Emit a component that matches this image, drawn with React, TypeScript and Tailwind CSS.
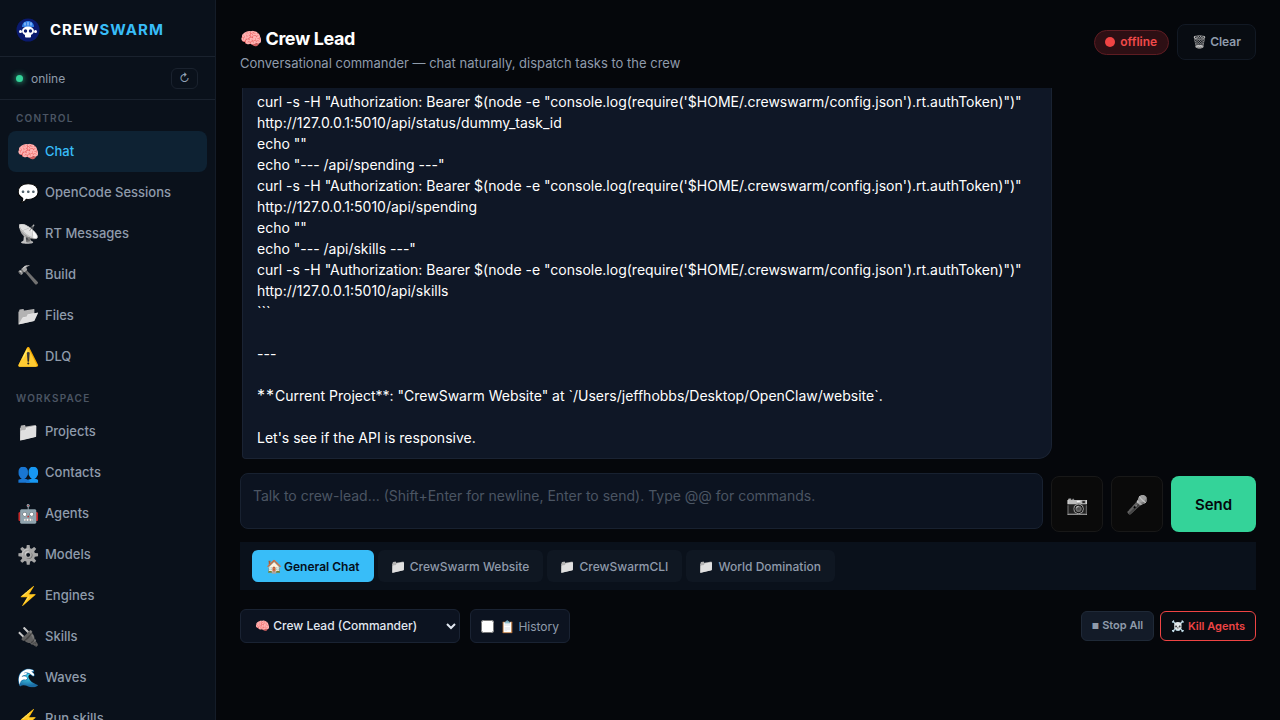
const inter = { fontFamily: 'Inter, "Noto Sans", sans-serif' };

const Logo = () => (
  <svg viewBox="0 0 24 24" className="w-[24px] h-[24px] shrink-0">
    <circle cx="12" cy="12" r="11.5" fill="#0a1a6e" />
    <path d="M6 9c0-4 3-6 6-6s6 2 6 6z" fill="#2f7fe8" />
    <path d="M9 4.500v3M12 4v3.500M15 4.500v3" stroke="#bcdcff" strokeWidth="1" />
    <ellipse cx="12" cy="13" rx="6" ry="4.500" fill="#fff" />
    <rect x="9" y="16" width="6" height="3.500" rx="1" fill="#fff" />
    <circle cx="9.500" cy="13" r="1.700" fill="#0a1a6e" />
    <circle cx="14.500" cy="13" r="1.700" fill="#0a1a6e" />
    <circle cx="4.500" cy="13.500" r="1.500" fill="#fff" />
    <circle cx="19.500" cy="13.500" r="1.500" fill="#fff" />
  </svg>
);

const NavItem = ({ icon, label, active, gray }: { icon: string; label: string; active?: boolean; gray?: boolean }) => (
  <div
    className={
      active
        ? 'h-[41px] mx-2 px-[9px] rounded-lg flex items-center gap-[9px] bg-[#0e2233] text-[#38bdf8] text-[13px] font-medium'
        : 'h-[41px] mx-2 px-[9px] flex items-center gap-[9px] text-[#8f9bab] text-[13px] font-medium'
    }
  >
    <span className={gray ? 'w-[19px] text-[18px] leading-none text-center shrink-0 grayscale' : 'w-[19px] text-[18px] leading-none text-center shrink-0'}>{icon}</span>
    <span>{label}</span>
  </div>
);

const SectionLabel = ({ children }: { children: string }) => (
  <div className="px-4 text-[10px] font-semibold tracking-[1.2px] text-[#4b5563] uppercase">{children}</div>
);

const lines = [
  'curl -s -H "Authorization: Bearer $(node -e "console.log(require(\'$HOME/.crewswarm/config.json\').rt.authToken)")"',
  'http://127.0.0.1:5010/api/status/dummy_task_id',
  'echo ""',
  'echo "--- /api/spending ---"',
  'curl -s -H "Authorization: Bearer $(node -e "console.log(require(\'$HOME/.crewswarm/config.json\').rt.authToken)")"',
  'http://127.0.0.1:5010/api/spending',
  'echo ""',
  'echo "--- /api/skills ---"',
  'curl -s -H "Authorization: Bearer $(node -e "console.log(require(\'$HOME/.crewswarm/config.json\').rt.authToken)")"',
  'http://127.0.0.1:5010/api/skills',
  '```',
  '',
  '---',
  '',
];

const Tab = ({ label }: { label: string }) => (
  <div className="h-8 pl-[12px] pr-[14px] pt-[1px] rounded-md bg-[#0f1722] flex items-center text-[12px] font-medium text-[#8f9bab] whitespace-nowrap">
    <span className="text-[13px] grayscale mr-[1px]">📁</span>&nbsp;{label}
  </div>
);

export default function App() {
  return (
    <div className="h-[720px] w-[1280px] flex overflow-hidden bg-[#05070b]" style={inter}>
      {/* Sidebar */}
      <aside className="w-[216px] shrink-0 bg-[#0a111b] border-r border-[#141c28] overflow-hidden">
        <div className="h-[57px] pl-4 pt-1 flex items-center gap-[10px] border-b border-[#1a222e]">
          <Logo />
          <div className="text-[15px] font-bold tracking-[1px]">
            <span className="text-white">CREW</span>
            <span className="text-[#38bdf8]">SWARM</span>
          </div>
        </div>
        <div className="h-[43px] pl-4 pr-[17px] pt-[1px] flex items-center justify-between border-b border-[#1a222e]">
          <div className="flex items-center gap-[8px] text-[12px] text-[#8f9bab]">
            <span className="w-[7px] h-[7px] rounded-full bg-[#34d399] shadow-[0_0_6px_#34d399]" />
            online
          </div>
          <div className="w-[27px] h-[21px] rounded-md border border-[#1a222e] flex items-center justify-center text-[11px] text-[#94a3b8]">
            ↻
          </div>
        </div>
        <div className="pt-[11px] pb-[5px]"><SectionLabel>Control</SectionLabel></div>
        <NavItem icon="🧠" label="Chat" active />
        <NavItem icon="💬" label="OpenCode Sessions" />
        <NavItem icon="📡" label="RT Messages" gray />
        <NavItem icon="🔨" label="Build" gray />
        <NavItem icon="📂" label="Files" gray />
        <NavItem icon="⚠️" label="DLQ" />
        <div className="pt-[14px] pb-[5px]"><SectionLabel>Workspace</SectionLabel></div>
        <NavItem icon="📁" label="Projects" gray />
        <NavItem icon="👥" label="Contacts" />
        <NavItem icon="🤖" label="Agents" />
        <NavItem icon="⚙️" label="Models" gray />
        <NavItem icon="⚡" label="Engines" />
        <NavItem icon="🔌" label="Skills" gray />
        <NavItem icon="🌊" label="Waves" />
        <NavItem icon="⚡" label="Run skills" />
      </aside>

      {/* Main */}
      <main className="flex-1 min-w-0 px-6 flex flex-col">
        <header className="h-[88px] shrink-0 pt-[25px] flex justify-between items-start">
          <div>
            <h1 className="text-[18px] leading-[28px] font-bold tracking-[-0.4px] text-white">🧠 Crew Lead</h1>
            <p className="text-[13px] leading-[20px] text-[#8f9bab]">
              Conversational commander — chat naturally, dispatch tasks to the crew
            </p>
          </div>
          <div className="-mt-[1px] flex items-center gap-2">
            <div className="h-[25px] pl-[10px] pr-[11px] rounded-full bg-[#2d0f14] border border-[#5e1c22] flex items-center gap-[5px] text-[12px] font-semibold text-[#f04a4a]">
              <span className="w-[10px] h-[10px] rounded-full bg-[#f04444]" />
              offline
            </div>
            <div className="h-[36px] px-[14px] rounded-lg bg-[#080c12] border border-[#121924] flex items-center text-[12px] font-semibold text-[#8f9bab]">
              <span className="grayscale mr-[3px]">🗑️</span> Clear
            </div>
          </div>
        </header>

        <div className="h-[371px] shrink-0 overflow-hidden flex flex-col justify-end">
          <div className="ml-[2px] w-[810px] shrink-0 px-[14px] pt-[3px] pb-[10px] bg-[#0f1726] border border-t-0 border-[#1a2333] rounded-bl-[4px] rounded-br-[14px] text-[14px] leading-[21px] text-white">
            {lines.map((l, i) => (
              <div key={i} className="h-[21px] whitespace-pre">{l}</div>
            ))}
            <div className="h-[21px] whitespace-pre">
              <span className="text-[16px] leading-none tracking-[1px]">**</span>Current Project**: "CrewSwarm Website" at `/Users/jeffhobbs/Desktop/OpenClaw/website`.
            </div>
            <div className="h-[21px]" />
            <div className="h-[21px] whitespace-pre">Let's see if the API is responsive.</div>
          </div>
        </div>

        <div className="mt-[14px] flex gap-2 items-start">
          <textarea
            className="w-[803px] h-[56px] px-[12px] py-[11px] rounded-lg bg-[#0c1320] border border-[#182130] text-[14px] leading-[21px] resize-none outline-none placeholder:text-[#4b5563]"
            placeholder="Talk to crew-lead... (Shift+Enter for newline, Enter to send). Type @@ for commands."
          />
          <div className="mt-[3px] w-[52px] h-[56px] rounded-lg bg-[#070a10] border border-[#121924] flex items-center justify-center text-[18px] grayscale">📷</div>
          <div className="mt-[3px] w-[52px] h-[56px] rounded-lg bg-[#070a10] border border-[#121924] flex items-center justify-center text-[18px] grayscale">🎤</div>
          <div className="mt-[3px] w-[85px] h-[56px] pt-[2px] rounded-lg bg-[#34d399] flex items-center justify-center text-[15px] font-semibold text-[#05070b]">Send</div>
        </div>

        <div className="mt-[10px] h-[48px] px-3 bg-[#0a111b] flex items-center gap-[4px]">
          <div className="h-8 px-[14px] pt-[1px] rounded-md bg-[#38bdf8] flex items-center text-[12px] font-semibold text-[#05101c] whitespace-nowrap">
            <span className="text-[13px] mr-[2px]">🏠</span> General Chat
          </div>
          <Tab label="CrewSwarm Website" />
          <Tab label="CrewSwarmCLI" />
          <Tab label="World Domination" />
        </div>

        <div className="mt-[18px] flex items-center justify-between">
          <div className="flex items-center gap-[10px]">
            <select className="w-[220px] h-[34px] px-[10px] rounded-md bg-[#0c1320] border border-[#1a2333] text-[12px] font-medium text-[#e2e8f0] outline-none" style={inter}>
              <option>🧠 Crew Lead (Commander)</option>
            </select>
            <label className="mt-[1px] h-[34px] px-[10px] pt-[1px] rounded-md bg-[#0c1320] border border-[#1a2333] flex items-center gap-[6px] text-[12px] text-[#8f9bab]">
              <input type="checkbox" className="w-[13px] h-[13px]" />
              📋 History
            </label>
          </div>
          <div className="flex items-center gap-[6px]">
            <div className="h-[30px] px-[10px] rounded-md bg-[#131b28] border border-[#1f2937] flex items-center text-[11px] font-semibold text-[#8f9bab]">
              <span className="text-[8px] mr-[3px]">■</span>Stop All
            </div>
            <div className="h-[30px] pt-[2px] px-[10px] rounded-md bg-[#080c12] border border-[#ef4444] flex items-center text-[11px] font-semibold text-[#ef4444]">
              ☠️ Kill Agents
            </div>
          </div>
        </div>
      </main>
    </div>
  );
}
